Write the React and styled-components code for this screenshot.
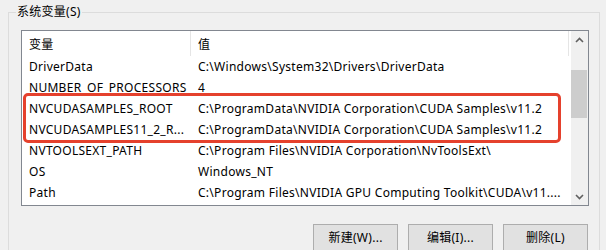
import React from 'react';
import styled, {createGlobalStyle} from 'styled-components';

const GlobalStyle = createGlobalStyle`
  html, body {
    margin: 0;
    padding: 0;
    background: #f0f0f0;
    overflow: hidden;
  }
  body {
    font-family: "Noto Sans", "Noto Sans CJK SC", sans-serif;
    font-size: 12px;
    letter-spacing: 0.28px;
    color: #000;
  }
`

const Page = styled.div`
  width: 606px;
  height: 250px;
  padding: 12px 0 0 8px;
  box-sizing: border-box;
  overflow: hidden;
`

const Group = styled.div`
  position: relative;
  width: 592px;
  box-sizing: border-box;
  border: 1px solid #dcdcdc;
  border-bottom: none;
  padding: 17px 10px 20px 12px;
`

const Legend = styled.div`
  position: absolute;
  top: -9px;
  left: 7px;
  padding: 0 1px;
  background: #f0f0f0;
  line-height: 16px;
`

const ListView = styled.div`
  position: relative;
  display: flex;
  height: 176px;
  box-sizing: border-box;
  border: 1px solid #828790;
  background: #fff;
`

const Table = styled.div`
  flex: 1;
  display: flex;
  flex-direction: column;
  overflow: hidden;
`

const HeaderRow = styled.div`
  display: flex;
  height: 25px;
  align-items: center;
`

const HeaderCell = styled.div`
  box-sizing: border-box;
  width: ${props => props.width}px;
  height: 100%;
  padding-left: 7px;
  display: flex;
  align-items: center;
  border-right: 1px solid #e5e5e5;
  white-space: nowrap;
`

const Row = styled.div`
  display: flex;
  height: 21px;
  align-items: center;
`

const Cell = styled.div`
  box-sizing: border-box;
  width: ${props => props.width}px;
  padding-left: 7px;
  white-space: nowrap;
  overflow: hidden;
`

const ScrollBar = styled.div`
  width: 17px;
  display: flex;
  flex-direction: column;
  background: #f0f0f0;
`

const ArrowButton = styled.div`
  height: 17px;
  display: flex;
  align-items: center;
  justify-content: center;
`

const Track = styled.div`
  flex: 1;
  padding-top: 22px;
`

const Thumb = styled.div`
  width: 16px;
  height: 48px;
  background: #cdcdcd;
`

const Highlight = styled.div`
  position: absolute;
  left: 1px;
  top: 62px;
  width: 538px;
  height: 50px;
  box-sizing: border-box;
  border: 3px solid #e5412d;
  border-radius: 5px;
  pointer-events: none;
`

const ButtonRow = styled.div`
  display: flex;
  justify-content: flex-end;
  gap: 10px;
  margin-top: 18px;
  padding-right: 1px;
`

const Button = styled.button`
  width: 85px;
  height: 28px;
  background: #e1e1e1;
  border: 1px solid #adadad;
  border-radius: 0;
  font-family: inherit;
  font-size: 12px;
  letter-spacing: inherit;
  color: #000;
  padding: 0 0 2px;
`

const Chevron = ({up}) => (
    <svg width="9" height="6" viewBox="0 0 9 6">
        <path d={up ? 'M1 5 L4.5 1.5 L8 5' : 'M1 1 L4.5 4.5 L8 1'}
              fill="none" stroke="#606060" strokeWidth="1.6"/>
    </svg>
)

const rows = [
    ['DriverData', 'C:\\Windows\\System32\\Drivers\\DriverData'],
    ['NUMBER_OF_PROCESSORS', '4'],
    ['NVCUDASAMPLES_ROOT', 'C:\\ProgramData\\NVIDIA Corporation\\CUDA Samples\\v11.2'],
    ['NVCUDASAMPLES11_2_R...', 'C:\\ProgramData\\NVIDIA Corporation\\CUDA Samples\\v11.2'],
    ['NVTOOLSEXT_PATH', 'C:\\Program Files\\NVIDIA Corporation\\NvToolsExt\\'],
    ['OS', 'Windows_NT'],
    ['Path', 'C:\\Program Files\\NVIDIA GPU Computing Toolkit\\CUDA\\v11....'],
]

export default function App() {
    return (
        <Page>
            <GlobalStyle/>
            <Group>
                <Legend>系统变量(S)</Legend>
                <ListView>
                    <Table>
                        <HeaderRow>
                            <HeaderCell width={169}>变量</HeaderCell>
                            <HeaderCell width={378}>值</HeaderCell>
                        </HeaderRow>
                        {rows.map(([name, value]) => (
                            <Row key={name}>
                                <Cell width={169}>{name}</Cell>
                                <Cell width={378}>{value}</Cell>
                            </Row>
                        ))}
                    </Table>
                    <ScrollBar>
                        <ArrowButton><Chevron up/></ArrowButton>
                        <Track><Thumb/></Track>
                        <ArrowButton><Chevron/></ArrowButton>
                    </ScrollBar>
                    <Highlight/>
                </ListView>
                <ButtonRow>
                    <Button>新建(W)...</Button>
                    <Button>编辑(I)...</Button>
                    <Button>删除(L)</Button>
                </ButtonRow>
            </Group>
        </Page>
    )
}
